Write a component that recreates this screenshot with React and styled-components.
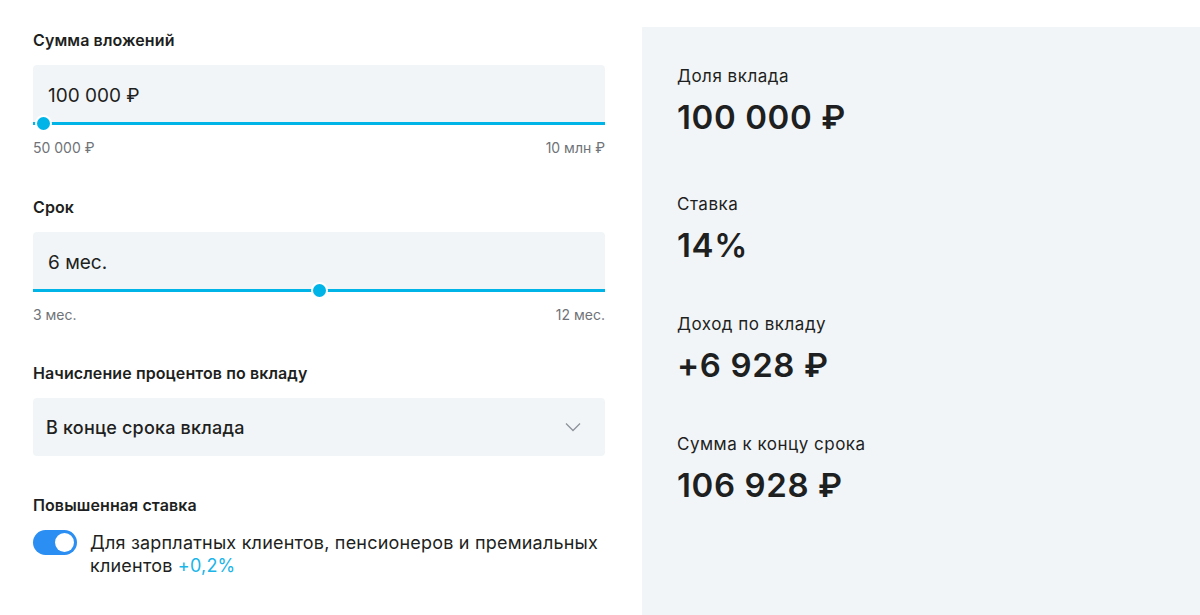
import React from 'react';
import styled, { createGlobalStyle } from 'styled-components';

const GlobalStyle = createGlobalStyle`
  html, body {
    margin: 0;
    padding: 0;
    background: #fff;
    font-family: Inter, "Noto Sans", sans-serif;
    color: #1e1f21;
  }
  * { box-sizing: border-box; }
`;

const Page = styled.div`
  display: flex;
  align-items: flex-start;
  width: 1200px;
  height: 615px;
  overflow: hidden;
`;

const Form = styled.div`
  width: 572px;
  margin-left: 33px;
  padding-top: 30px;
  flex-shrink: 0;
`;

const Field = styled.div`
  margin-bottom: ${(p) => p.$gap || 40}px;
`;

const Label = styled.div`
  font-size: 16px;
  line-height: 20px;
  font-weight: 600;
  margin-bottom: 15px;
  letter-spacing: 0.1px;
`;

const InputBox = styled.div`
  height: 57px;
  background: #f2f5f8;
  border-radius: 4px 4px 0 0;
  display: flex;
  align-items: center;
  padding: 3px 15px 0;
  font-size: 19px;
  font-weight: 400;
`;

const Track = styled.div`
  position: relative;
  height: 3px;
  background: #00b4e8;
`;

const Thumb = styled.div`
  position: absolute;
  top: 50%;
  width: 17px;
  height: 17px;
  margin-left: -8.5px;
  margin-top: -8.5px;
  border-radius: 50%;
  background: #00b4e8;
  border: 2px solid #fff;
`;

const Range = styled.div`
  display: flex;
  justify-content: space-between;
  margin-top: 15px;
  font-size: 14px;
  line-height: 16px;
  color: #6f7378;
`;

const Select = styled.div`
  height: 58px;
  background: #f2f5f8;
  border-radius: 4px;
  display: flex;
  align-items: center;
  justify-content: space-between;
  padding: 0 24px 0 13px;
  font-size: 18px;
  font-weight: 500;
  letter-spacing: 0.2px;
`;

const ToggleRow = styled.div`
  display: flex;
  align-items: flex-start;
  gap: 13px;
`;

const Switch = styled.div`
  flex-shrink: 0;
  width: 44px;
  height: 25px;
  border-radius: 13px;
  background: #2b8ef2;
  display: flex;
  align-items: center;
  justify-content: flex-end;
  padding: 0 3px;
`;

const Knob = styled.div`
  width: 19px;
  height: 19px;
  border-radius: 50%;
  background: #fff;
`;

const ToggleText = styled.div`
  font-size: 18px;
  line-height: 23px;
  margin-top: 1px;
  letter-spacing: 0.2px;
`;

const Accent = styled.span`
  color: #1bb5e8;
`;

const NextBox = styled.div`
  height: 40px;
  background: #f2f5f8;
  border-radius: 4px;
  margin-top: 30px;
`;

const Summary = styled.div`
  flex: 1;
  margin-left: 37px;
  margin-top: 27px;
  height: 588px;
  background: #f2f5f8;
  padding: 37px 35px 0;
  display: flex;
  flex-direction: column;
  gap: 47px;
`;

const Stat = styled.div`
  &:first-child {
    margin-bottom: 8px;
  }
`;

const StatLabel = styled.div`
  font-size: 17px;
  line-height: 24px;
  margin-bottom: 9px;
  letter-spacing: 0.5px;
`;

const StatValue = styled.div`
  font-size: 33px;
  line-height: 40px;
  font-weight: 600;
  letter-spacing: 0.6px;
`;

const Chevron = () => (
  <svg width="16" height="10" viewBox="0 0 16 10" fill="none">
    <path d="M1 1.5l7 7 7-7" stroke="#8c939b" strokeWidth="1.3" />
  </svg>
);

const Slider = ({ value, min, max }) => {
  const pct = ((value - min) / (max - min)) * 100;
  return (
    <Track>
      <Thumb style={{ left: `${pct}%` }} />
    </Track>
  );
};

const stats = [
  ['Доля вклада', '100 000 ₽'],
  ['Ставка', '14%'],
  ['Доход по вкладу', '+6 928 ₽'],
  ['Сумма к концу срока', '106 928 ₽'],
];

export default function App() {
  return (
    <Page>
      <GlobalStyle />
      <Form>
        <Field $gap={41}>
          <Label>Сумма вложений</Label>
          <InputBox>100 000 ₽</InputBox>
          <Slider value={1.75} min={0} max={100} />
          <Range>
            <span>50 000 ₽</span>
            <span>10 млн ₽</span>
          </Range>
        </Field>
        <Field>
          <Label>Срок</Label>
          <InputBox>6 мес.</InputBox>
          <Slider value={50} min={0} max={100} />
          <Range>
            <span>3 мес.</span>
            <span>12 мес.</span>
          </Range>
        </Field>
        <Field $gap={39}>
          <Label>Начисление процентов по вкладу</Label>
          <Select>
            <span>В конце срока вклада</span>
            <Chevron />
          </Select>
        </Field>
        <Field $gap={0}>
          <Label>Повышенная ставка</Label>
          <ToggleRow>
            <Switch>
              <Knob />
            </Switch>
            <ToggleText>
              Для зарплатных клиентов, пенсионеров и премиальных клиентов <Accent>+0,2%</Accent>
            </ToggleText>
          </ToggleRow>
        </Field>
        <NextBox />
      </Form>
      <Summary>
        {stats.map(([label, value]) => (
          <Stat key={label}>
            <StatLabel>{label}</StatLabel>
            <StatValue>{value}</StatValue>
          </Stat>
        ))}
      </Summary>
    </Page>
  );
}
